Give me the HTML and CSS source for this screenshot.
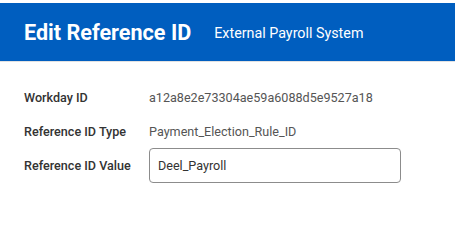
FILE: index.html
```html
<!DOCTYPE html>
<html>
<head>
<meta charset="utf-8">
<link rel="stylesheet" href="styles.css">
</head>
<body>
<div class="page">
  <header class="header">
    <h1 class="title">Edit Reference ID</h1>
    <span class="subtitle">External Payroll System</span>
  </header>
  <div class="form">
    <div class="row">
      <div class="label">Workday ID</div>
      <div class="value">a12a8e2e73304ae59a6088d5e9527a18</div>
    </div>
    <div class="row">
      <div class="label">Reference ID Type</div>
      <div class="value">Payment_Election_Rule_ID</div>
    </div>
    <div class="row row-input">
      <div class="label">Reference ID Value</div>
      <input class="input" type="text" value="Deel_Payroll">
    </div>
  </div>
</div>
</body>
</html>
```

FILE: styles.css
```css
html, body {
  margin: 0;
  padding: 0;
  background: #ffffff;
}
.page {
  padding-top: 3px;
  font-family: Roboto, "Liberation Sans", sans-serif;
}
.header {
  display: flex;
  align-items: center;
  height: 58px;
  padding-left: 24px;
  background: #005ebf;
  border-bottom: 1px solid #e2e2e2;
  margin-right: 1px;
}
.title {
  margin: 0;
  font-size: 21.6px;
  font-weight: 700;
  color: #ffffff;
  letter-spacing: 0;
}
.subtitle {
  margin-left: 23px;
  font-size: 14.3px;
  color: #ffffff;
  padding-top: 2px;
}
.form {
  padding: 18px 0 0 24px;
}
.row {
  display: flex;
  align-items: center;
  height: 34px;
}
.row-input {
  height: 35px;
}
.label {
  width: 125px;
  flex: none;
  font-size: 12.6px;
  font-weight: 500;
  color: #333333;
}
.value {
  font-size: 12.6px;
  color: #555555;
}
.input {
  box-sizing: border-box;
  width: 252px;
  height: 35px;
  margin: 0;
  padding: 0 8px;
  border: 1px solid #8c8c8c;
  border-radius: 4px;
  font-family: Roboto, "Liberation Sans", sans-serif;
  font-size: 12.6px;
  color: #333333;
  background: #ffffff;
  outline: none;
}
```
